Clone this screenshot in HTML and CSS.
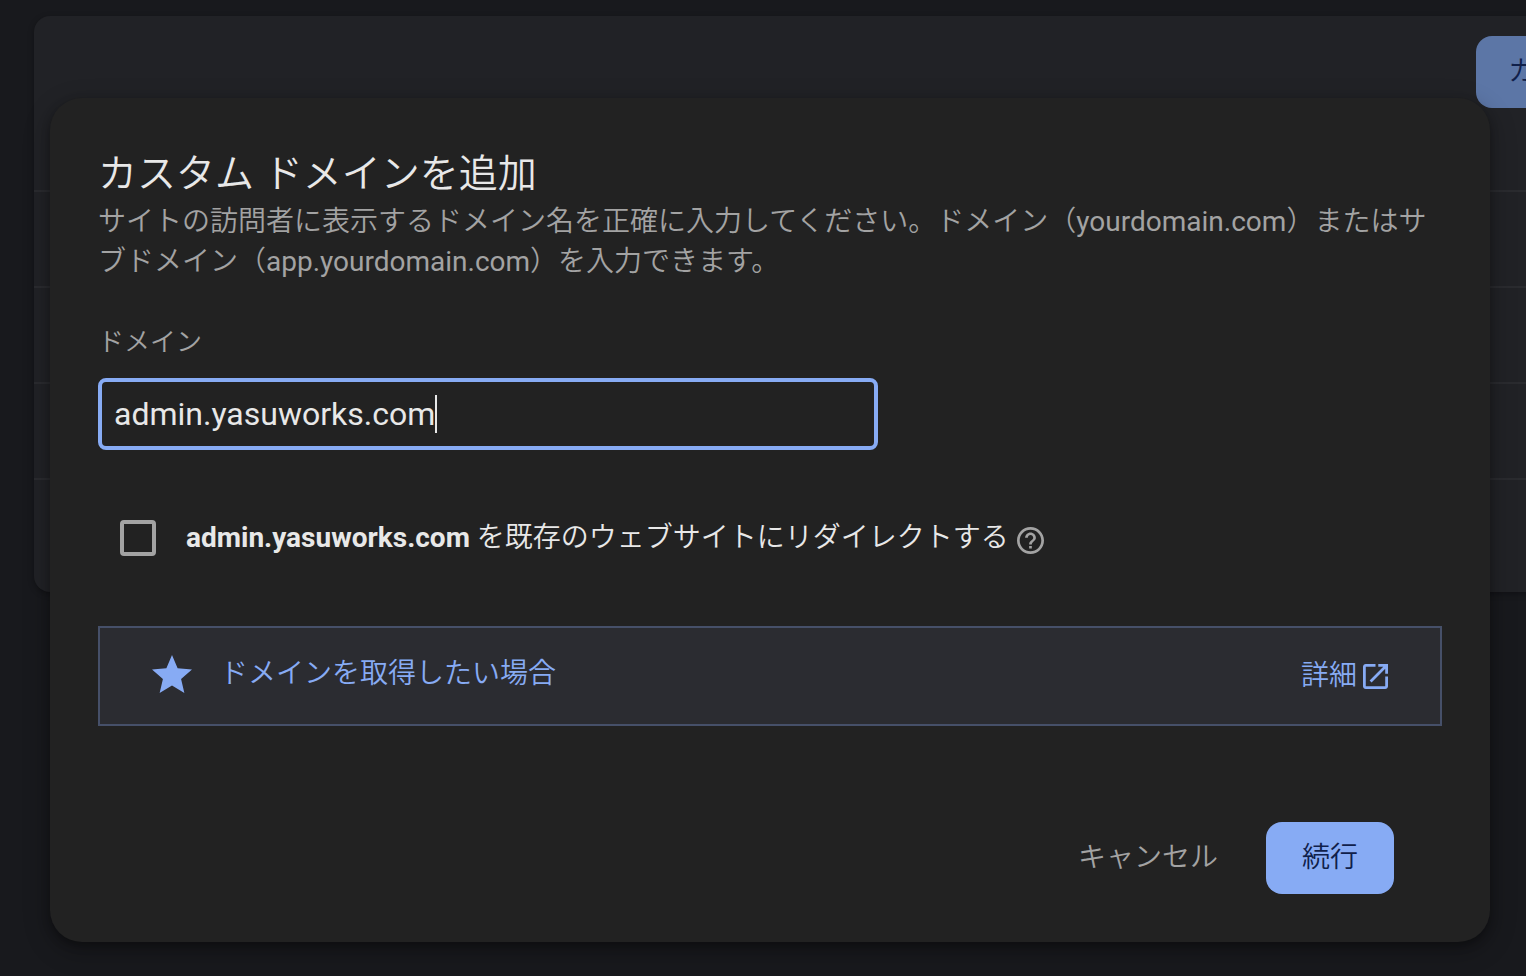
FILE: index.html
```html
<!DOCTYPE html>
<html lang="ja">
<head>
<meta charset="utf-8">
<meta name="viewport" content="width=device-width, initial-scale=1">
<title>カスタム ドメインを追加</title>
<link rel="stylesheet" href="styles.css">
</head>
<body>
<main class="page">
  <section class="panel">
    <div class="panel-head"><button type="button" class="btn btn-dim">カ</button></div>
    <div class="panel-row"></div>
    <div class="panel-row"></div>
    <div class="panel-row"></div>
    <div class="panel-row panel-row-last"></div>
  </section>
</main>
<div class="overlay">
  <form class="dialog" role="dialog" aria-labelledby="dialog-title">
    <h1 class="title" id="dialog-title">カスタム ドメインを追加</h1>
    <p class="lead">サイトの訪問者に表示するドメイン名を正確に入力してください。ドメイン（yourdomain.com）またはサブドメイン（app.yourdomain.com）を入力できます。</p>
    <label class="label" for="domain">ドメイン</label>
    <div class="field">
      <input class="input" id="domain" type="text" value="admin.yasuworks.com">
      <span class="caret"></span>
    </div>
    <div class="option">
      <input class="check" id="redirect" type="checkbox">
      <label class="option-label" for="redirect"><strong>admin.yasuworks.com</strong> を既存のウェブサイトにリダイレクトする</label>
      <button type="button" class="help" aria-label="ヘルプ">
        <svg class="help-icon" viewBox="2 2 20 20"><path d="M11 18h2v-2h-2v2zm1-16C6.48 2 2 6.48 2 12s4.480 10 10 10 10-4.480 10-10S17.520 2 12 2zm0 18c-4.410 0-8-3.590-8-8s3.590-8 8-8 8 3.590 8 8-3.590 8-8 8zm0-14c-2.210 0-4 1.790-4 4h2c0-1.100.9-2 2-2s2 .9 2 2c0 2-3 1.750-3 5h2c0-2.250 3-2.500 3-5 0-2.210-1.790-4-4-4z"/></svg>
      </button>
    </div>
    <div class="promo">
      <div class="promo-main">
        <svg class="star" viewBox="2 2 20 19"><path d="M12 17.270 18.180 21l-1.640-7.030L22 9.240l-7.190-.61L12 2 9.190 8.630 2 9.240l5.460 4.730L5.820 21z"/></svg>
        <span>ドメインを取得したい場合</span>
      </div>
      <a class="more" href="#">詳細<svg class="open" viewBox="3 3 18 18"><path d="M12 3v2H5v14h14v-7h2v7c0 1.100-.9 2-2 2H5c-1.110 0-2-.9-2-2V5c0-1.100.89-2 2-2h7zm2 0h7v7h-2V6.410l-9.830 9.830-1.410-1.410L17.590 5H14V3z"/></svg></a>
    </div>
    <div class="actions">
      <button type="button" class="btn btn-text">キャンセル</button>
      <button type="submit" class="btn btn-primary">続行</button>
    </div>
  </form>
</div>
</body>
</html>
```
FILE: styles.css
```css
* { box-sizing: border-box; }

body {
  margin: 0;
  min-height: 100vh;
  overflow: hidden;
  background: #18191d;
  color: #e8e8e8;
  font: 400 28px/40px Roboto, "Noto Sans CJK JP DemiLight", "Noto Sans CJK JP", sans-serif;
}

.page {
  padding: 16px 0 0 34px;
  overflow: hidden;
}

.panel {
  margin-right: -98px;
  margin-bottom: 16px;
  border-radius: 16px;
  background: #212226;
  box-shadow: 0 2px 6px rgba(0, 0, 0, .3);
}

.panel-head {
  display: flex;
  justify-content: flex-end;
  height: 174px;
  padding: 20px;
}

.panel-row {
  height: 96px;
  border-top: 2px solid #2a2b2f;
}

.panel-row-last { height: 114px; }

.overlay {
  position: absolute;
  inset: 0;
  padding: 98px 36px 34px 50px;
}

.dialog {
  display: flex;
  flex-direction: column;
  padding: 48px;
  border-radius: 32px;
  background: #222;
  box-shadow: 0 4px 8px rgba(0, 0, 0, .3), 0 8px 24px 4px rgba(0, 0, 0, .2);
}

.title {
  margin: 0;
  font-size: 39px;
  font-weight: 400;
  line-height: 56px;
}

.lead {
  margin: 0;
  color: #a3a3a3;
}

.label {
  align-self: flex-start;
  margin-top: 40px;
  color: #a3a3a3;
  font-size: 26px;
}

.field {
  display: flex;
  align-items: center;
  width: 58%;
  height: 72px;
  margin-top: 16px;
  padding: 0 12px;
  border: 4px solid #87abf4;
  border-radius: 8px;
}

.input {
  field-sizing: content;
  padding: 0;
  border: 0;
  outline: 0;
  background: transparent;
  color: inherit;
  font: 400 32px/40px Roboto, sans-serif;
}

.caret {
  width: 2px;
  height: 38px;
  background: #e8e8e8;
}

.option {
  display: flex;
  align-items: center;
  margin-top: 68px;
  padding-left: 22px;
}

.check {
  appearance: none;
  width: 36px;
  height: 36px;
  margin: 0 30px 0 0;
  border: 4px solid #a3a3a3;
  border-radius: 4px;
}

.option-label strong { font-weight: 700; }

.help {
  display: flex;
  margin: 4px 0 0 8px;
  padding: 0;
  border: 0;
  background: none;
}

.help-icon {
  width: 27px;
  height: 27px;
  fill: #a3a3a3;
}

.promo {
  display: flex;
  align-items: center;
  justify-content: space-between;
  height: 100px;
  margin-top: 68px;
  padding: 0 52px;
  border: 2px solid #465069;
  background: #2b2c31;
  color: #87abf4;
}

.promo-main {
  display: flex;
  align-items: center;
  gap: 28px;
  padding-bottom: 4px;
}

.star {
  width: 40px;
  height: 38px;
  fill: currentColor;
}

.more {
  display: flex;
  align-items: center;
  gap: 6px;
  color: inherit;
  text-decoration: none;
}

.open {
  width: 25px;
  height: 25px;
  fill: currentColor;
}

.actions {
  display: flex;
  justify-content: flex-end;
  gap: 16px;
  margin-top: 96px;
  padding-right: 48px;
}

.btn {
  height: 72px;
  padding: 0 32px;
  border: 0;
  border-radius: 16px;
  font: inherit;
}

.btn-text {
  background: none;
  color: #a3a3a3;
}

.btn-primary {
  min-width: 128px;
  background: #87abf4;
  color: #10204a;
}

.btn-dim {
  width: 128px;
  background: #5c76a6;
  color: #10204a;
  text-align: left;
}
```
